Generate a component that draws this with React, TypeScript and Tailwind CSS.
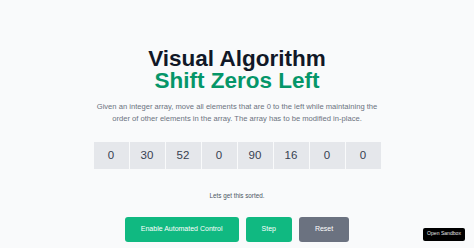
import { useState } from "react";

const initial = [0, 30, 52, 0, 90, 16, 0, 0];

const App = () => {
  const [values] = useState<number[]>(initial);

  return (
    <div
      className="relative min-h-screen w-full bg-[#f9fafb] flex flex-col items-center pt-[48px]"
      style={{ fontFamily: '"Liberation Sans", Arial, sans-serif' }}
    >
      <h1 className="text-[22.5px] leading-[22px] font-bold text-center text-[#111827]">
        <span className="block">Visual Algorithm</span>
        <span className="block text-[#059669]">Shift Zeros Left</span>
      </h1>

      <p className="mt-[9px] w-[288px] text-center text-[7.6px] leading-[12px] text-[#6b7280]">
        Given an integer array, move all elements that are 0 to the left while
        maintaining the order of other elements in the array. The array has to
        be modified in-place.
      </p>

      <div className="mt-[17px] flex gap-px">
        {values.map((v, i) => (
          <div
            key={i}
            className="w-[35px] h-[27px] bg-[#e5e7eb] flex items-center justify-center text-[11.5px] text-[#374151]"
          >
            {v}
          </div>
        ))}
      </div>

      <p className="mt-[22px] text-[6.3px] leading-[10px] text-[#4b5563]">
        Lets get this sorted.
      </p>

      <div className="mt-[16px] flex gap-[7px]">
        <button className="h-[24.5px] px-4 rounded-[3px] bg-[#10b981] text-white text-[7px]">
          Enable Automated Control
        </button>
        <button className="h-[24.5px] px-4 rounded-[3px] bg-[#10b981] text-white text-[7px]">
          Step
        </button>
        <button className="h-[24.5px] px-4 rounded-[3px] bg-[#6b7280] text-white text-[7px]">
          Reset
        </button>
      </div>

      <div className="fixed bottom-[7px] right-[9px] h-[13.5px] px-[4px] flex items-center rounded-[2px] bg-black text-[5.1px] text-[#e5e7eb]">
        Open Sandbox
      </div>
    </div>
  );
};

export default App;
